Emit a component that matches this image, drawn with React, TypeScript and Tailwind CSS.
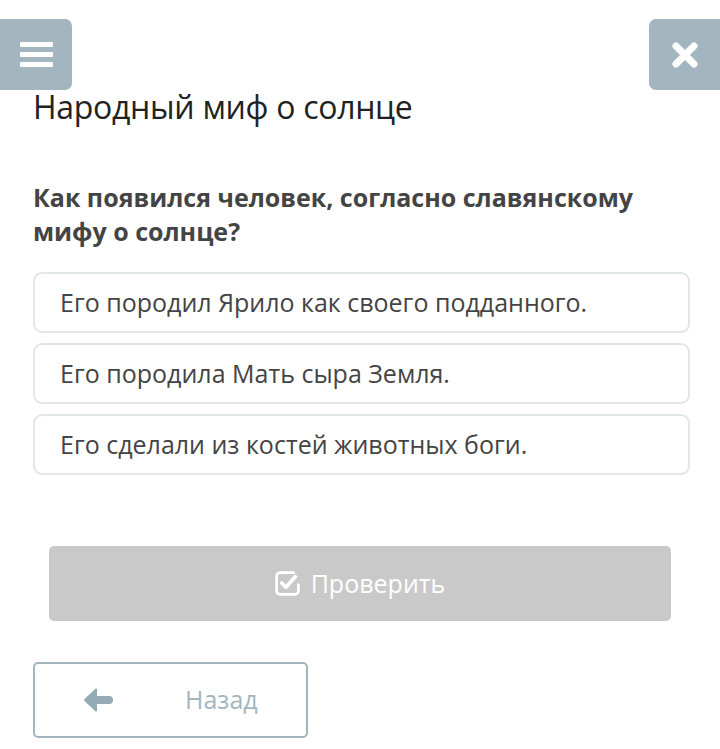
import React from "react";

export default function App() {
  const options = [
    "Его породил Ярило как своего подданного.",
    "Его породила Мать сыра Земля.",
    "Его сделали из костей животных боги.",
  ];
  return (
    <div
      className="w-[720px] h-[749px] bg-white overflow-hidden relative"
      style={{ fontFamily: '"Open Sans", "Noto Sans", sans-serif' }}
    >
      <div className="flex justify-between pt-[19px]">
        <div className="w-[72px] h-[71px] bg-[#a3b6bf] rounded-r-[7px] flex flex-col items-center justify-center gap-[5px]">
          <div className="w-[33px] h-[5px] bg-white rounded-[1px]" />
          <div className="w-[33px] h-[5px] bg-white rounded-[1px]" />
          <div className="w-[33px] h-[5px] bg-white rounded-[1px]" />
        </div>
        <div className="w-[71px] h-[71px] bg-[#a3b6bf] rounded-l-[7px] flex items-center justify-center">
          <svg width="28" height="28" viewBox="0 0 28 28">
            <path d="M5 5 L23 23 M23 5 L5 23" stroke="white" strokeWidth="7" strokeLinecap="round" />
          </svg>
        </div>
      </div>
      <div className="px-[33px]">
        <h1 className="text-[32px] leading-[36px] font-normal text-[#222] mt-[-1px] tracking-[-0.3px]">
          Народный миф о солнце
        </h1>
        <h2 className="mt-[55px] text-[25px] leading-[34px] font-bold text-[#444] w-[650px]">
          Как появился человек, согласно славянскому мифу о солнце?
        </h2>
        <div className="mt-[24px] flex flex-col gap-[10px]">
          {options.map((o) => (
            <div
              key={o}
              className="h-[61px] w-[657px] border-2 border-[#e1e6e8] rounded-[9px] flex items-center pl-[25px] text-[25px] text-[#444]"
            >
              {o}
            </div>
          ))}
        </div>
        <div className="mt-[71px] ml-[16px] w-[622px] h-[75px] bg-[#c9c9c9] rounded-[5px] flex items-center justify-center gap-[11px] text-white text-[25px]">
          <svg width="25" height="25" viewBox="0 0 24 24" fill="none">
            <path
              d="M19 1.5 H5 A3.5 3.5 0 0 0 1.5 5 V19 A3.5 3.5 0 0 0 5 22.5 H19 A3.5 3.5 0 0 0 22.5 19 V12"
              stroke="white"
              strokeWidth="2.6"
            />
            <path d="M6.5 11.5 L10.5 15.5 L19.5 5.5" stroke="white" strokeWidth="3.6" strokeLinecap="round" strokeLinejoin="round" />
          </svg>
          <span className="font-normal">Проверить</span>
        </div>
        <div className="mt-[41px] w-[275px] h-[76px] border-2 border-[#a3b6bf] rounded-[5px] flex items-center">
          <svg className="ml-[48px]" width="30" height="26" viewBox="0 0 30 26" fill="none">
            <path d="M2 13 L13 2.5 L13 23.5 Z" fill="#94aab4" stroke="#94aab4" strokeWidth="2" strokeLinejoin="round" />
            <path d="M12 13 H26" stroke="#94aab4" strokeWidth="8" strokeLinecap="round" />
          </svg>
          <span className="ml-[72px] text-[25px] text-[#a3b6bf]">Назад</span>
        </div>
      </div>
    </div>
  );
}
